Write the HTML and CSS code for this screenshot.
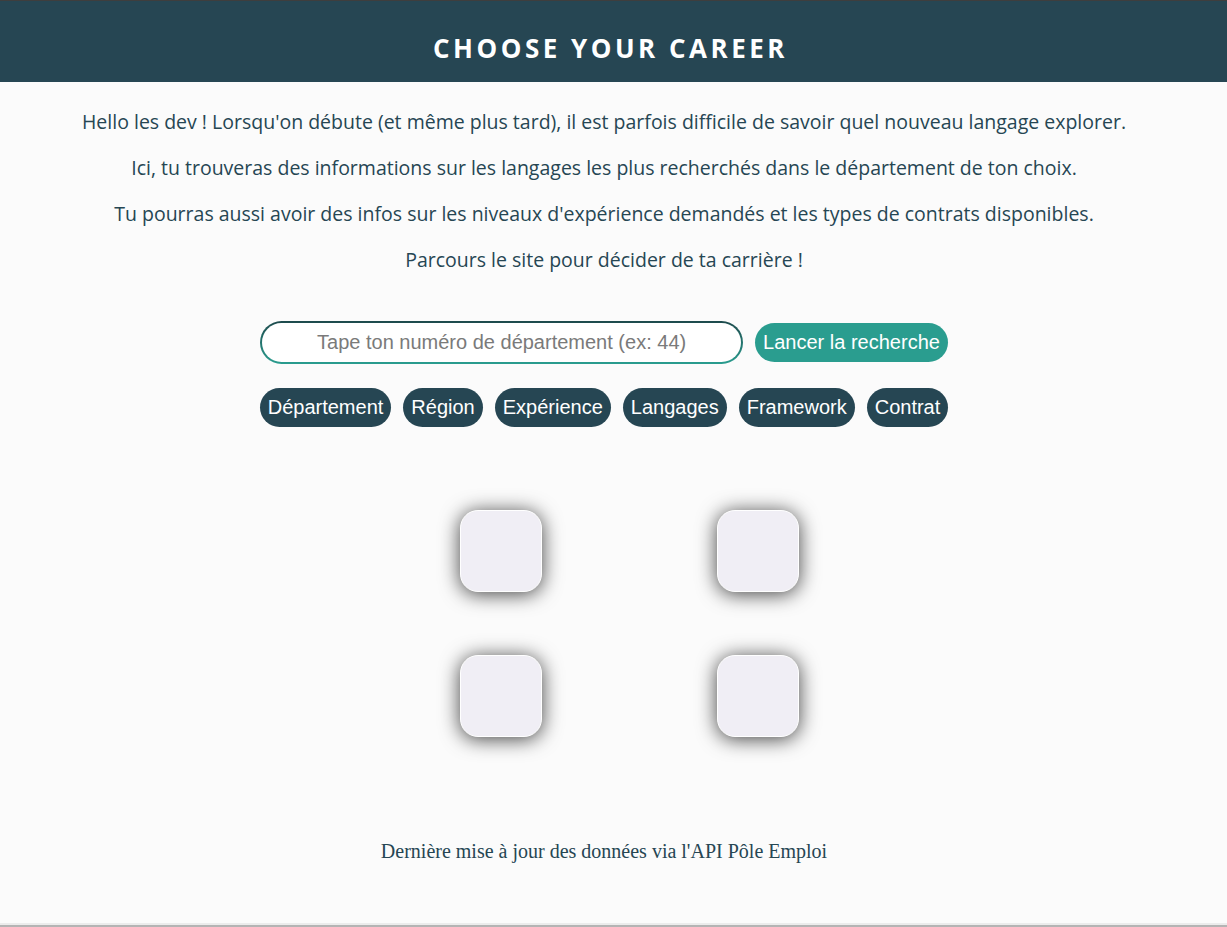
FILE: index.html
```html
<!DOCTYPE html>
<html lang="fr">
<head>
<meta charset="utf-8">
<title>Choose your career</title>
<link rel="stylesheet" href="styles.css">
</head>
<body>
<div class="page">
  <header class="topbar">
    <h1 class="title">CHOOSE YOUR CAREER</h1>
  </header>
  <main class="content">
    <section class="intro">
      <p>Hello les dev ! Lorsqu'on débute (et même plus tard), il est parfois difficile de savoir quel nouveau langage explorer.</p>
      <p>Ici, tu trouveras des informations sur les langages les plus recherchés dans le département de ton choix.</p>
      <p>Tu pourras aussi avoir des infos sur les niveaux d'expérience demandés et les types de contrats disponibles.</p>
      <p>Parcours le site pour décider de ta carrière !</p>
    </section>
    <form class="search" onsubmit="return false">
      <input class="search-input" type="text" placeholder="Tape ton numéro de département (ex: 44)">
      <button class="search-btn" type="submit">Lancer la recherche</button>
    </form>
    <nav class="filters">
      <button class="pill">Département</button>
      <button class="pill">Région</button>
      <button class="pill">Expérience</button>
      <button class="pill">Langages</button>
      <button class="pill">Framework</button>
      <button class="pill">Contrat</button>
    </nav>
    <section class="cards">
      <div class="card"></div>
      <div class="card"></div>
      <div class="card"></div>
      <div class="card"></div>
    </section>
  </main>
  <footer class="foot">Dernière mise à jour des données via l'API Pôle Emploi</footer>
</div>
</body>
</html>
```
FILE: styles.css
```css
* { box-sizing: border-box; }
html, body { margin: 0; padding: 0; }
body {
  background: #fbfbfb;
  color: #264653;
  font-family: "Open Sans", "DejaVu Sans", sans-serif;
}
.page {
  height: 927px;
  display: flex;
  flex-direction: column;
  border-top: 1px solid #3e3e3e;
  border-bottom: 2px solid #b4b4b4;
  box-shadow: inset 0 -2px 0 #ececec;
  overflow: hidden;
}
.topbar {
  background: #264653;
  height: 81px;
  display: flex;
  align-items: center;
  justify-content: center;
  padding-right: 19px;
}
.title {
  margin: 0;
  color: #ffffff;
  font-family: "Open Sans", "DejaVu Sans", sans-serif;
  font-weight: bold;
  font-size: 26px;
  letter-spacing: 3.5px;
  padding-left: 13px;
  padding-top: 13px;
}
.content {
  display: flex;
  flex-direction: column;
  align-items: center;
  padding-right: 19px;
}
.intro {
  padding-top: 26px;
  text-align: center;
}
.intro p {
  margin: 0 0 18px;
  font-size: 19.5px;
  line-height: 28px;
}
.search {
  margin-top: 29px;
  display: flex;
  align-items: center;
  gap: 12px;
}
.search-input {
  width: 483px;
  height: 43px;
  border: 2px solid transparent;
  border-radius: 22px;
  background: linear-gradient(#ffffff, #ffffff) padding-box,
              linear-gradient(#1d4a4c, #2a9d8f) border-box;
  font-family: "Liberation Sans", Arial, sans-serif;
  font-size: 20px;
  text-align: center;
  color: #264653;
  outline: none;
}
.search-input::placeholder { color: #7a7a7a; }
.search-btn {
  height: 39px;
  padding: 0 8px;
  border: none;
  border-radius: 20px;
  background: #2a9d8f;
  color: #ffffff;
  font-family: "Liberation Sans", Arial, sans-serif;
  font-size: 20px;
}
.filters {
  margin-top: 24px;
  display: flex;
  gap: 12px;
}
.pill {
  height: 39px;
  padding: 0 8px;
  border: none;
  border-radius: 20px;
  background: #264653;
  color: #ffffff;
  font-family: "Liberation Sans", Arial, sans-serif;
  font-size: 20px;
}
.cards {
  margin-top: 83px;
  margin-left: 50px;
  display: grid;
  grid-template-columns: 82px 82px;
  grid-template-rows: 82px 82px;
  column-gap: 175px;
  row-gap: 63px;
}
.card {
  background: #f0eef5;
  border: 1px solid #ffffff;
  border-radius: 18px;
  box-shadow: 0 2px 20px rgba(0, 0, 0, 0.75);
}
.foot {
  margin-top: auto;
  margin-bottom: 62px;
  padding-right: 19px;
  text-align: center;
  font-family: "Liberation Serif", "Times New Roman", serif;
  font-size: 20px;
  color: #264653;
}
```
